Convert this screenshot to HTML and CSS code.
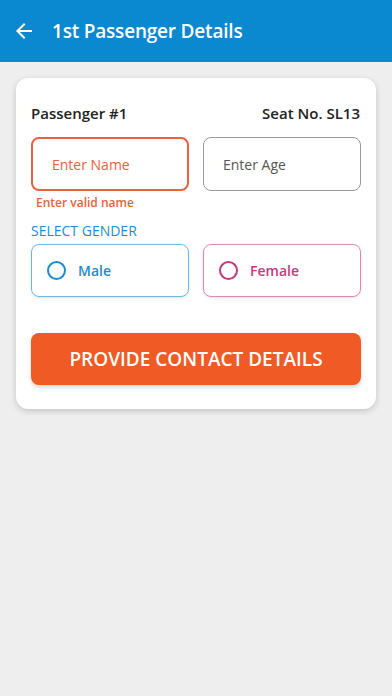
FILE: index.html
```html
<!DOCTYPE html>
<html>
<head>
  <title>1st Passenger Details</title>
  <meta name="viewport" content="width=device-width, initial-scale=1.0">
  <link rel="stylesheet" href="styles.css">
</head>
<body>
    <div class="app-bar">
        <svg class="back-icon" viewBox="0 0 24 24" width="24" height="24">
            <path d="M20 11H7.83l5.59-5.59L12 4l-8 8 8 8 1.41-1.41L7.83 13H20v-2z" fill="#fff"/>
        </svg>
        <h1>1st Passenger Details</h1>
    </div>
    <div class="content">
        <div class="card">
            <div class="card-head">
                <span>Passenger #1</span>
                <span>Seat No. SL13</span>
            </div>
            <div class="row">
                <div class="field">
                    <input type="text" class="input error" placeholder="Enter Name">
                    <div class="error-text">Enter valid name</div>
                </div>
                <div class="field">
                    <input type="text" class="input" placeholder="Enter Age">
                </div>
            </div>
            <div class="label">SELECT GENDER</div>
            <div class="row">
                <label class="gender male">
                    <span class="radio"></span>
                    Male
                </label>
                <label class="gender female">
                    <span class="radio"></span>
                    Female
                </label>
            </div>
            <button class="button">PROVIDE CONTACT DETAILS</button>
        </div>
    </div>
</body>
</html>
```

FILE: styles.css
```css
body {
  font-family: "Open Sans", "Noto Sans", sans-serif;
  background: #eeeeee;
  margin: 0;
  padding: 0;
  min-height: 100vh;
}

.app-bar {
  height: 62px;
  background: #0a88d0;
  display: flex;
  align-items: center;
  padding: 0 12px;
  box-sizing: border-box;
}
.back-icon {
  margin-right: 16px;
}
.app-bar h1 {
  margin: 0;
  color: white;
  font-size: 19px;
  font-weight: 600;
  letter-spacing: -0.2px;
}

.content {
  padding: 16px;
}
.card {
  background: white;
  border-radius: 12px;
  box-shadow: 0px 2px 6px rgba(0, 0, 0, 0.18);
  padding: 25px 15px 24px 15px;
}
.card-head {
  display: flex;
  justify-content: space-between;
  font-size: 15px;
  font-weight: 600;
  color: #222;
  margin-bottom: 14px;
  padding-right: 1px;
}
.row {
  display: flex;
  gap: 14px;
}
.field {
  flex: 1;
}
.input {
  width: 100%;
  height: 54px;
  box-sizing: border-box;
  border: 1px solid #999;
  border-radius: 8px;
  padding: 0 19px;
  font-family: inherit;
  font-size: 14px;
  outline: none;
}
.input::placeholder {
  color: #555;
}
.input.error {
  border: 2px solid #e9613d;
}
.input.error::placeholder {
  color: #e9613d;
}
.error-text {
  color: #e9613d;
  font-size: 12px;
  font-weight: 600;
  margin: 3px 0 0 5px;
}
.label {
  color: #1a8cd0;
  font-size: 14px;
  margin: 10px 0 4px 0;
}
.gender {
  flex: 1;
  height: 53px;
  box-sizing: border-box;
  border-radius: 8px;
  display: flex;
  align-items: center;
  padding-left: 15px;
  font-size: 14px;
  font-weight: 600;
  box-shadow: 0px 1px 3px rgba(0, 0, 0, 0.12);
}
.radio {
  width: 15px;
  height: 15px;
  border-radius: 50%;
  border: 2px solid;
  margin-right: 12px;
}
.male {
  border: 1px solid #6cb8e0;
  color: #1a8cd0;
}
.male .radio {
  border-color: #1a8cd0;
}
.female {
  border: 1px solid #dd88b4;
  color: #c2397e;
}
.female .radio {
  border-color: #c2397e;
}
.button {
  width: 100%;
  height: 52px;
  margin-top: 36px;
  background-color: #f05a24;
  color: white;
  border: none;
  border-radius: 8px;
  font-family: inherit;
  font-size: 19px;
  font-weight: 600;
  box-shadow: 0px 2px 4px rgba(0, 0, 0, 0.18);
}
```
